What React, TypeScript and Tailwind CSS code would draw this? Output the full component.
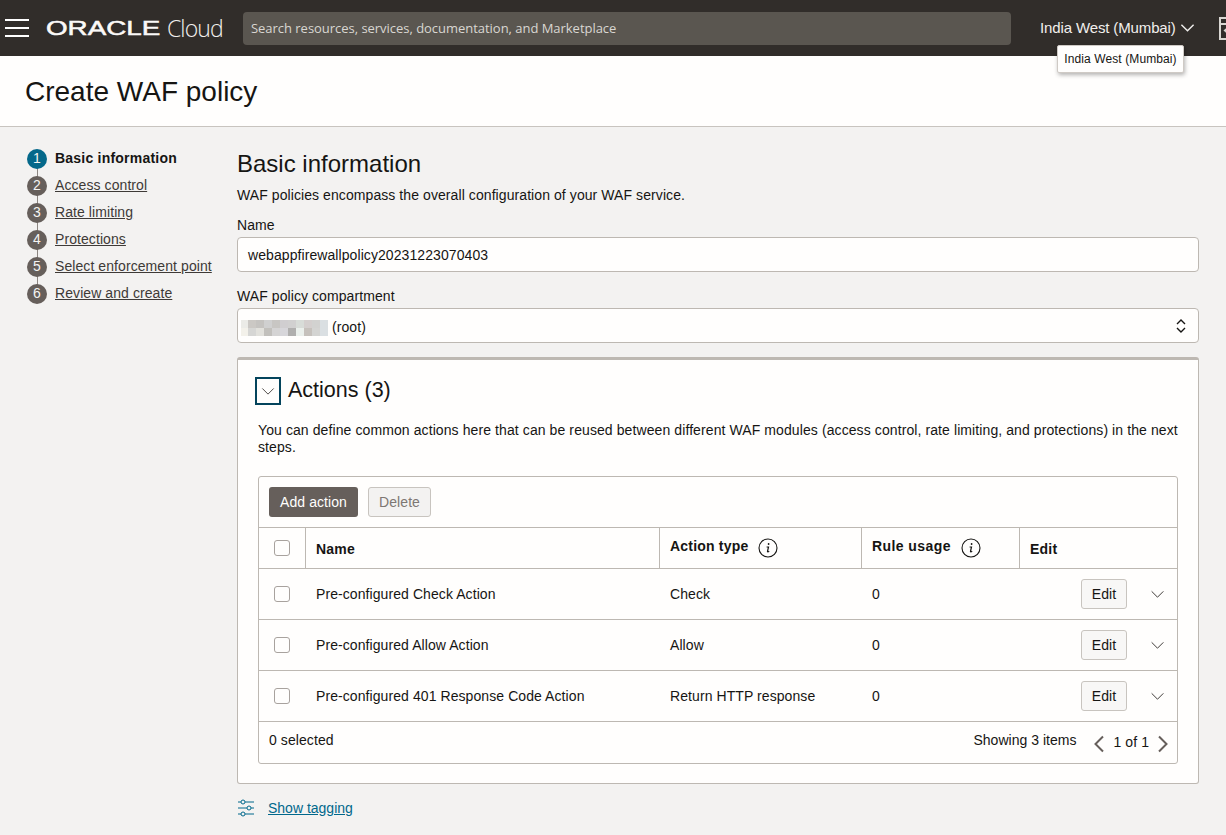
import React from "react";

const font = "font-['Liberation_Sans',Arial,sans-serif]";

const steps = ["Basic information", "Access control", "Rate limiting", "Protections", "Select enforcement point", "Review and create"];

const pixelRows: string[][] = [
  ["#ebebe7", "#cbc8c4", "#c5c3c0", "#d0d0d0", "#c8c6c3", "#d0ced0", "#d1d0d0", "#d8dcd8", "#d4cfce", "#d2d2d0", "#dadfe2"],
  ["#f3f1ea", "#d6d6d4", "#e2e1dc", "#c2c0bc", "#d5d4d4", "#d7d6da", "#b0afae", "#ebf0ec", "#c6c1bc", "#d4d4d2", "#dadfe2"],
];

function Chevron({ className = "" }: { className?: string }) {
  return (
    <svg viewBox="0 0 16 10" className={className} fill="none" stroke="currentColor" strokeWidth="1.1">
      <path d="M1.5 1.5 8 8l6.5-6.5" />
    </svg>
  );
}

function Info() {
  return (
    <svg viewBox="0 0 20 20" className="w-[20px] h-[20px] text-[#161513]" fill="none" stroke="currentColor" strokeWidth="1.1">
      <circle cx="10" cy="10" r="9" />
      <circle cx="10.6" cy="6" r="0.9" fill="currentColor" stroke="none" />
      <path d="M8.6 9h1.9l-1 4.4c-.1.6.4.8 1.7-.1" strokeWidth="1.2" />
    </svg>
  );
}

function Checkbox() {
  return <div className="w-4 h-4 rounded-[3px] border border-[#a8a29e] bg-[#fffefd]" />;
}

const rows = [
  ["Pre-configured Check Action", "Check"],
  ["Pre-configured Allow Action", "Allow"],
  ["Pre-configured 401 Response Code Action", "Return HTTP response"],
];

export default function App() {
  return (
    <div className={`${font} h-[835px] w-[1226px] overflow-hidden bg-[#f3f2f1] text-[14px] leading-[17px] tracking-[0.08px] text-[#161513] relative`}>
      <header className="h-14 bg-[#312d2a] flex items-center text-white">
        <div className="w-[46px] shrink-0 pl-[5px] flex flex-col gap-[6px]">
          <div className="h-[2px] w-6 bg-white" />
          <div className="h-[2px] w-6 bg-white" />
          <div className="h-[2px] w-6 bg-white" />
        </div>
        <div className="w-[197px] shrink-0 flex items-center h-full">
          <span className="text-[20px] font-normal text-[#fbf9f8] leading-none origin-left scale-x-[1.39] w-[121px] tracking-normal whitespace-nowrap [-webkit-text-stroke:0.5px_#fbf9f8]">ORACLE</span>
          <span className="font-['Open_Sans'] font-light text-[23px] text-[#f1efed] tracking-[-0.9px] leading-none">Cloud</span>
        </div>
        <div className="w-[768px] shrink-0 h-[33px] rounded-[4px] bg-[#5a5650] flex items-center pl-2 text-[13px] text-[#d9d6d2] font-['Open_Sans'] tracking-[-0.03px] whitespace-nowrap">
          Search resources, services, documentation, and Marketplace
        </div>
        <div className="ml-[29px] flex items-center gap-[4px] text-[15px] text-[#f1efed] tracking-[-0.13px] whitespace-nowrap -mt-[1px]">
          India West (Mumbai)
          <Chevron className="w-[15px] h-[10px] stroke-[1.5]" />
        </div>
        <svg viewBox="0 0 18 23" className="ml-[24px] w-[18px] h-[23px] shrink-0 text-[#d9d6d2]" fill="none" stroke="currentColor" strokeWidth="2">
          <path d="M1 1h16v21H1zM1 7h16M10 10l-4 3.5 4 3.5" />
        </svg>
      </header>

      <div className="absolute left-[1057px] top-[45px] w-[127px] h-[28px] bg-[#fffefd] border border-[#cfcac5] rounded-[2px] shadow-[1px_2px_4px_rgba(0,0,0,0.3)] text-[12px] tracking-[0.1px] flex items-center justify-center text-[#161513] whitespace-nowrap">
        India West (Mumbai)
      </div>

      <div className="h-[71px] bg-[#fffefd] border-b border-[#c8c4bf] pl-[25px] pt-[19px]">
        <h1 className="text-[28px] leading-[34px] font-normal tracking-normal">Create WAF policy</h1>
      </div>

      <div className="flex">
        <nav className="w-[237px] shrink-0 pl-[27px] pt-[18px]">
          {steps.map((s, i) => (
            <div key={s} className="flex items-center h-[27px] relative">
              {i < steps.length - 1 && <div className="absolute left-[9.5px] top-[20px] w-[1px] h-[14px] bg-[#8c8681]" />}
              <div className={`w-5 h-5 rounded-full flex items-center justify-center text-[14px] text-[#f5f4f2] relative ${i === 0 ? "bg-[#04688a]" : "bg-[#665f5b]"}`}>{i + 1}</div>
              <span className={`ml-2 whitespace-nowrap ${i === 0 ? "font-bold text-[#161513] tracking-[0.22px]" : "underline text-[#3e3a37]"}`}>{s}</span>
            </div>
          ))}
        </nav>

        <main className="w-[962px] shrink-0 pt-[22px]">
          <h2 className="text-[24px] leading-[29px] font-normal tracking-normal">Basic information</h2>
          <p className="mt-[9px]">WAF policies encompass the overall configuration of your WAF service.</p>

          <label className="block mt-[13px]">Name</label>
          <div className="mt-[3px] h-[35px] rounded-[4px] border border-[#bdb8b2] bg-[#fffefd] flex items-center pl-[10px] pt-[2px]">webappfirewallpolicy20231223070403</div>

          <label className="block mt-[16px]">WAF policy compartment</label>
          <div className="mt-[3px] h-[35px] rounded-[4px] border border-[#bdb8b2] bg-[#fffefd] flex items-center pl-[3px] pr-[11px]">
            <svg width="87" height="16" viewBox="0 0 87 16" className="shrink-0 mt-[5px]" shapeRendering="crispEdges">
              {pixelRows.map((row, y) =>
                row.map((c, x) => (
                  <rect key={`${x}-${y}`} x={x === 0 ? 0 : 7 + (x - 1) * 8} y={y * 8} width={x === 0 ? 7 : 8} height="8" fill={c} />
                ))
              )}
            </svg>
            <span className="ml-[4px] pt-[4px]">(root)</span>
            <svg viewBox="0 0 12 16" className="ml-auto w-[12px] h-[16px] text-[#161513]" fill="none" stroke="currentColor" strokeWidth="1.4">
              <path d="M2 6l4-4 4 4M2 10l4 4 4-4" />
            </svg>
          </div>

          <section className="mt-[14px] h-[427px] rounded-[3px] border border-[#bdb8b2] border-t-[3px] bg-[#fffefd] pl-[20px] pr-[20px] pt-[17px]">
            <div className="flex items-center gap-[7px] -ml-[3px]">
              <button className="w-[26px] h-[28px] border-2 border-[#04445c] flex items-center justify-center text-[#4a4643]">
                <Chevron className="w-[14px] h-[9px]" />
              </button>
              <h3 className="text-[21.5px] leading-[24px] font-normal tracking-normal -mt-[2px]">Actions (3)</h3>
            </div>
            <p className="mt-[17px] leading-[17px] tracking-[0.095px]">You can define common actions here that can be reused between different WAF modules (access control, rate limiting, and protections) in the next steps.</p>

            <div className="mt-[20px] h-[288px] rounded-[3px] border border-[#bdb8b2]">
              <div className="h-[51px] border-b border-[#bdb8b2] flex items-center pl-[10px] pb-[1px] gap-[10px]">
                <button className="h-[30px] w-[89px] rounded-[3px] bg-[#665f5b] text-[#fffefd] pt-[2px]">Add action</button>
                <button className="h-[30px] w-[63px] rounded-[3px] border border-[#c8c4bf] bg-[#f3f2f1] text-[#7d7773] pt-[2px]">Delete</button>
              </div>

              <div className="grid grid-cols-[47px_354px_202px_158px_1fr] h-[41px] border-b border-[#bdb8b2] font-bold tracking-[0.2px]">
                <div className="border-r border-[#bdb8b2] flex items-center pl-[15px]"><Checkbox /></div>
                <div className="border-r border-[#bdb8b2] flex items-center pl-[10px] pt-[3px]">Name</div>
                <div className="border-r border-[#bdb8b2] flex items-center pl-[10px] gap-[10px]"><span className="-mt-[4px]">Action type</span><Info /></div>
                <div className="border-r border-[#bdb8b2] flex items-center pl-[10px] gap-[10px]"><span className="-mt-[4px] tracking-[0.42px]">Rule usage</span><Info /></div>
                <div className="flex items-center pl-[10px] pt-[3px]">Edit</div>
              </div>

              {rows.map(([name, type]) => (
                <div key={name} className="grid grid-cols-[47px_354px_202px_158px_1fr] h-[51px] border-b border-[#bdb8b2]">
                  <div className="flex items-center pl-[15px]"><Checkbox /></div>
                  <div className="flex items-center pl-[10px]">{name}</div>
                  <div className="flex items-center pl-[10px]">{type}</div>
                  <div className="flex items-center pl-[10px]">0</div>
                  <div className="flex items-center justify-end pr-[12px]">
                    <button className="w-[46px] h-[30px] rounded-[3px] border border-[#c8c4bf] bg-[#f8f7f6]">Edit</button>
                    <Chevron className="ml-[23px] w-[15px] h-[9px] text-[#3e3a37]" />
                  </div>
                </div>
              ))}

              <div className="h-[41px] flex items-center pl-[10px] pr-[8px]">
                <span className="-mt-[5px]">0 selected</span>
                <span className="ml-auto -mt-[5px] tracking-[0.02px]">Showing 3 items</span>
                <svg viewBox="0 0 12 18" className="ml-[17px] mt-[2px] w-[12px] h-[18px] text-[#665f5b]" fill="none" stroke="currentColor" strokeWidth="2"><path d="M10 1.5 2.5 9l7.5 7.5" /></svg>
                <span className="mx-[8px] whitespace-nowrap">1 of 1</span>
                <svg viewBox="0 0 12 18" className="mt-[2px] w-[12px] h-[18px] text-[#665f5b]" fill="none" stroke="currentColor" strokeWidth="2"><path d="m2 1.5 7.5 7.5L2 16.5" /></svg>
              </div>
            </div>
          </section>

          <div className="mt-[15px] flex items-center text-[#00688c] tracking-normal">
            <svg viewBox="0 0 18 18" className="w-[18px] h-[18px]" fill="none" stroke="currentColor" strokeWidth="1">
              <path d="M1 3h3M8 3h9M1 9h9M14 9h3M1 15h3M8 15h9" />
              <circle cx="6" cy="3" r="2" /><circle cx="12" cy="9" r="2" /><circle cx="6" cy="15" r="2" />
            </svg>
            <a className="ml-[13px] underline">Show tagging</a>
          </div>
        </main>
      </div>
    </div>
  );
}
